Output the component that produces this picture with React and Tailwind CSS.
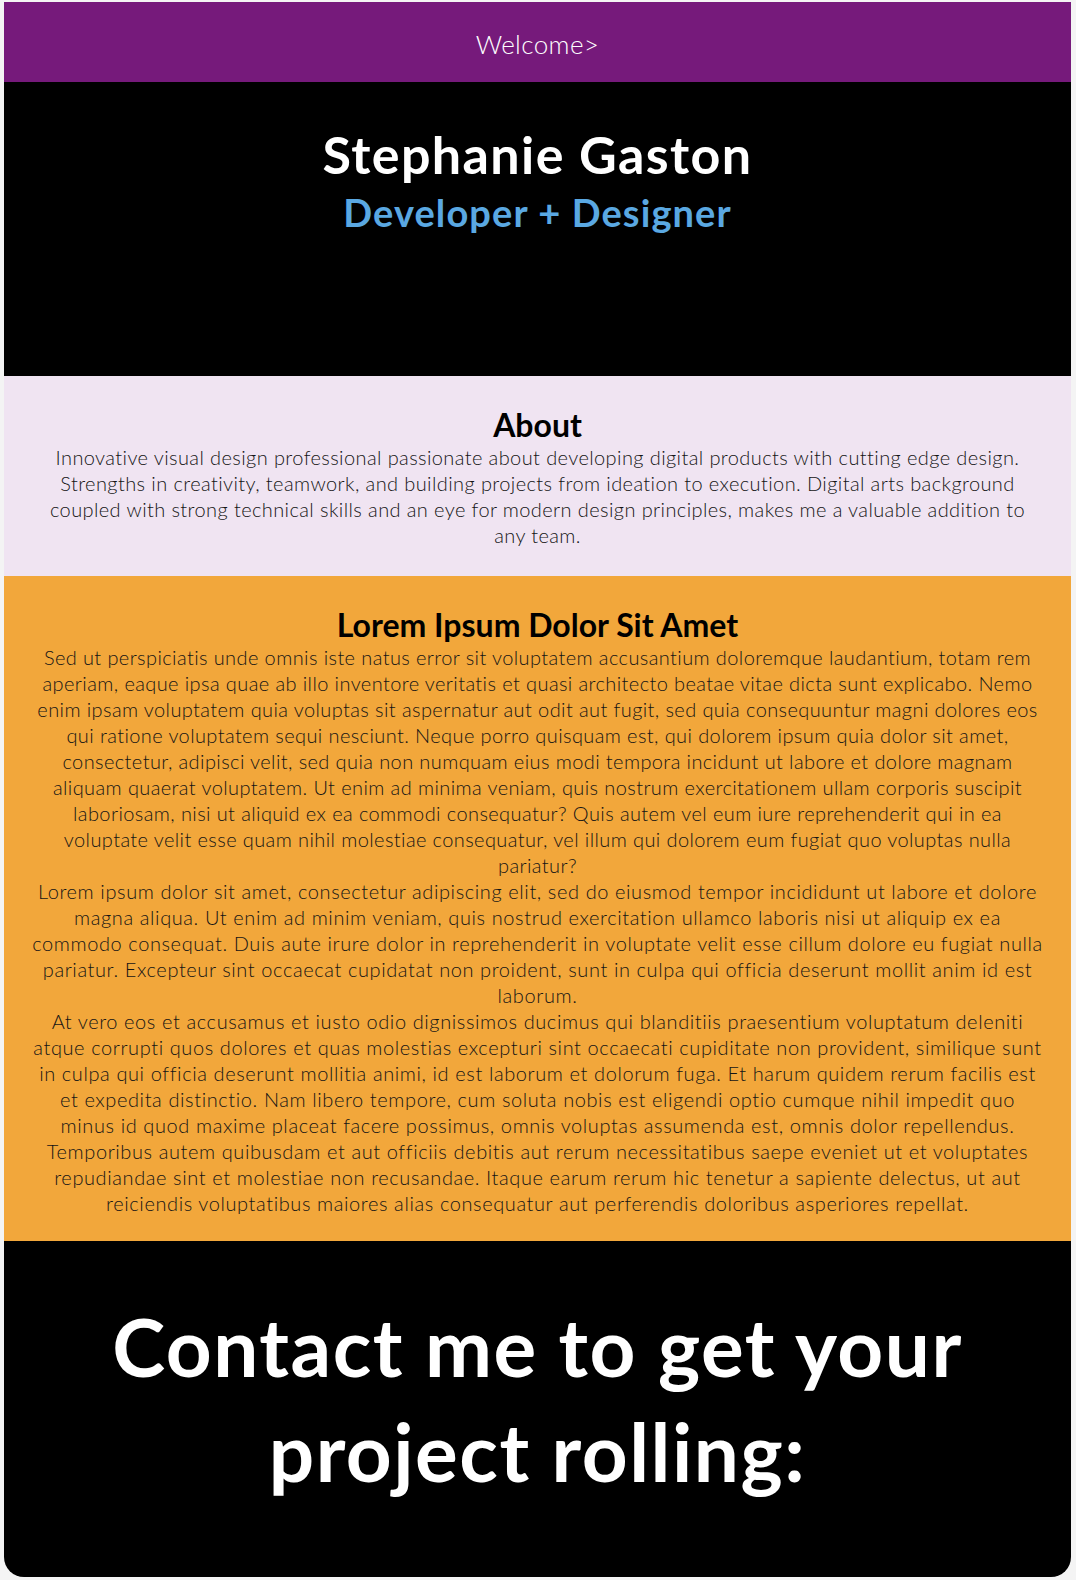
import React from 'react';

const font = { fontFamily: 'Lato, "Noto Sans", sans-serif' };

const loremParas = [
  {
    text: 'Sed ut perspiciatis unde omnis iste natus error sit voluptatem accusantium doloremque laudantium, totam rem aperiam, eaque ipsa quae ab illo inventore veritatis et quasi architecto beatae vitae dicta sunt explicabo. Nemo enim ipsam voluptatem quia voluptas sit aspernatur aut odit aut fugit, sed quia consequuntur magni dolores eos qui ratione voluptatem sequi nesciunt. Neque porro quisquam est, qui dolorem ipsum quia dolor sit amet, consectetur, adipisci velit, sed quia non numquam eius modi tempora incidunt ut labore et dolore magnam aliquam quaerat voluptatem. Ut enim ad minima veniam, quis nostrum exercitationem ullam corporis suscipit laboriosam, nisi ut aliquid ex ea commodi consequatur? Quis autem vel eum iure reprehenderit qui in ea voluptate velit esse quam nihil molestiae consequatur, vel illum qui dolorem eum fugiat quo voluptas nulla pariatur?',
    track: 'tracking-[0.4px]',
  },
  {
    text: 'Lorem ipsum dolor sit amet, consectetur adipiscing elit, sed do eiusmod tempor incididunt ut labore et dolore magna aliqua. Ut enim ad minim veniam, quis nostrud exercitation ullamco laboris nisi ut aliquip ex ea commodo consequat. Duis aute irure dolor in reprehenderit in voluptate velit esse cillum dolore eu fugiat nulla pariatur. Excepteur sint occaecat cupidatat non proident, sunt in culpa qui officia deserunt mollit anim id est laborum.',
    track: 'tracking-[0.6px]',
  },
  {
    text: 'At vero eos et accusamus et iusto odio dignissimos ducimus qui blanditiis praesentium voluptatum deleniti atque corrupti quos dolores et quas molestias excepturi sint occaecati cupiditate non provident, similique sunt in culpa qui officia deserunt mollitia animi, id est laborum et dolorum fuga. Et harum quidem rerum facilis est et expedita distinctio. Nam libero tempore, cum soluta nobis est eligendi optio cumque nihil impedit quo minus id quod maxime placeat facere possimus, omnis voluptas assumenda est, omnis dolor repellendus. Temporibus autem quibusdam et aut officiis debitis aut rerum necessitatibus saepe eveniet ut et voluptates repudiandae sint et molestiae non recusandae. Itaque earum rerum hic tenetur a sapiente delectus, ut aut reiciendis voluptatibus maiores alias consequatur aut perferendis doloribus asperiores repellat.',
    track: 'tracking-[0.6px]',
  },
];

function App() {
  return (
    <div className="min-h-screen bg-[#f4f4f4] pt-[2px] pl-[4px] pr-[5px] pb-[3px]" style={font}>
      <div className="overflow-hidden rounded-b-[20px] text-center">
        {/* Top bar */}
        <header className="h-[80px] bg-[#761a7b] flex items-center justify-center pt-[4px]">
          <span className="text-white text-[26px] font-light tracking-[0.4px]">Welcome&gt;</span>
        </header>

        {/* Hero */}
        <section className="h-[294px] bg-black pt-[42px]">
          <h1 className="text-white text-[52px] font-bold leading-[60px] tracking-[1.4px]">Stephanie Gaston</h1>
          <h2 className="text-[#5aa8e2] text-[38px] font-bold leading-[56px] tracking-[1.1px]">Developer + Designer</h2>
        </section>

        {/* About */}
        <section className="bg-[#f0e4f2] px-[28px] pt-[30px] pb-[28px] text-[#151515]">
          <h3 className="text-[32px] font-bold leading-[38px] text-black">About</h3>
          <p className="text-[20px] font-light leading-[26px] tracking-[0.4px]">
            Innovative visual design professional passionate about developing digital products with cutting edge design. Strengths in creativity, teamwork, and building projects from ideation to execution. Digital arts background coupled with strong technical skills and an eye for modern design principles, makes me a valuable addition to any team.
          </p>
        </section>

        {/* Lorem */}
        <section className="bg-[#f2a73b] px-[28px] pt-[30px] pb-[25px] text-[#151515]">
          <h3 className="text-[32px] font-bold leading-[38px] text-black">Lorem Ipsum Dolor Sit Amet</h3>
          {loremParas.map((p, i) => (
            <p key={i} className={`text-[20px] font-light leading-[26px] ${p.track}`}>{p.text}</p>
          ))}
        </section>

        {/* Contact */}
        <section className="h-[336px] bg-black flex items-center justify-center px-10 pb-[20px]">
          <h2 className="text-white text-[80px] font-bold leading-[105px] tracking-[1.5px] max-w-[900px]">
            Contact me to get your project rolling:
          </h2>
        </section>
      </div>
    </div>
  );
}

export default App;
